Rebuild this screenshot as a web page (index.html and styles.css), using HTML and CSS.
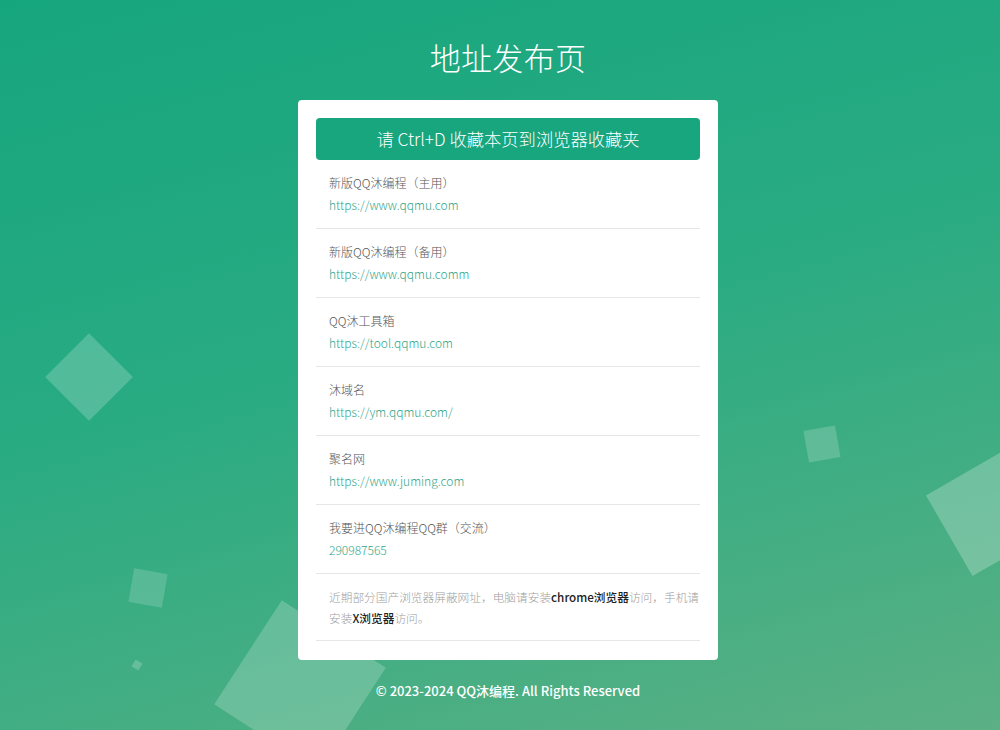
FILE: index.html
```html
<!DOCTYPE html>
<html lang="zh-CN">
<head>
<meta charset="utf-8">
<title>地址发布页</title>
<link rel="stylesheet" href="styles.css">
</head>
<body>
<div class="bg">
  <span class="sq sq1"></span>
  <span class="sq sq2"></span>
  <span class="sq sq3"></span>
  <span class="sq sq4"></span>
  <span class="sq sq5"></span>
  <span class="sq sq6"></span>
</div>
<main class="page">
  <h1 class="title">地址发布页</h1>
  <section class="card">
    <div class="tip">请 Ctrl+D 收藏本页到浏览器收藏夹</div>
    <ul class="list">
      <li class="item"><div class="name">新版QQ沐编程（主用）</div><a class="link">https://www.qqmu.com</a></li>
      <li class="item"><div class="name">新版QQ沐编程（备用）</div><a class="link">https://www.qqmu.comm</a></li>
      <li class="item"><div class="name">QQ沐工具箱</div><a class="link">https://tool.qqmu.com</a></li>
      <li class="item"><div class="name">沐域名</div><a class="link">https://ym.qqmu.com/</a></li>
      <li class="item"><div class="name">聚名网</div><a class="link">https://www.juming.com</a></li>
      <li class="item"><div class="name">我要进QQ沐编程QQ群（交流）</div><a class="link">290987565</a></li>
      <li class="item notice">近期部分国产浏览器屏蔽网址，电脑请安装<b>chrome浏览器</b>访问，手机请安装<b>X浏览器</b>访问。</li>
    </ul>
  </section>
  <footer class="footer">© 2023-2024 QQ沐编程. All Rights Reserved</footer>
</main>
</body>
</html>
```
FILE: styles.css
```css
* { box-sizing: border-box; }
html, body { margin: 0; padding: 0; }
body {
  width: 1000px;
  height: 730px;
  overflow: hidden;
  position: relative;
  font-family: "Noto Sans CJK SC", "Open Sans", sans-serif;
  background: linear-gradient(165deg, #16a67e 0%, #29ab82 45%, #5bb084 100%);
}
.bg { position: absolute; inset: 0; overflow: hidden; }
.sq { position: absolute; display: block; background: rgba(255,255,255,0.2); }
.sq1 { left: 58px; top: 346px; width: 62px; height: 62px; transform: rotate(45deg); }
.sq2 { left: 806px; top: 428px; width: 32px; height: 32px; transform: rotate(-10deg); background: rgba(255,255,255,0.18); }
.sq3 { left: 943px; top: 466px; width: 93px; height: 93px; transform: rotate(-30deg); background: rgba(255,255,255,0.24); }
.sq4 { left: 131px; top: 571px; width: 34px; height: 34px; transform: rotate(10deg); background: rgba(255,255,255,0.16); }
.sq5 { left: 133px; top: 661px; width: 8px; height: 8px; transform: rotate(30deg); background: rgba(255,255,255,0.2); }
.sq6 { left: 238px; top: 624px; width: 124px; height: 124px; transform: rotate(33deg); background: rgba(255,255,255,0.2); }

.page {
  position: relative;
  display: flex;
  flex-direction: column;
  align-items: center;
  padding-left: 16px;
}
.title {
  margin: 36px 0 0;
  height: 42px;
  line-height: 42px;
  font-size: 31px;
  font-weight: 300;
  color: #fff;
  letter-spacing: 0.3px;
}
.card {
  margin-top: 22px;
  width: 420px;
  background: #fff;
  border-radius: 4px;
  padding: 18px 18px 19px;
}
.tip {
  height: 42px;
  line-height: 42px;
  background: #18a67f;
  color: #fff;
  text-align: center;
  font-size: 17.3px;
  font-weight: 300;
  border-radius: 4px;
}
.list { list-style: none; margin: 0; padding: 0; }
.item {
  padding: 13px 12px 11px 13px;
  border-bottom: 1px solid #e6e6e6;
}
.name {
  font-size: 12px;
  line-height: 20px;
  color: #555;
  font-weight: 300;
}
.link {
  display: block;
  font-size: 12px;
  line-height: 24px;
  color: #2fa68a;
  text-decoration: none;
  font-weight: 300;
}
.notice {
  padding: 12px 0 12px 13px;
  font-size: 11.7px;
  line-height: 21px;
  color: #a0a0a0;
  font-weight: 300;
}
.notice b { color: #222; font-weight: 500; }
.footer {
  margin-top: 21px;
  font-size: 13px;
  line-height: 20px;
  color: #fff;
  font-weight: 500;
}
```
